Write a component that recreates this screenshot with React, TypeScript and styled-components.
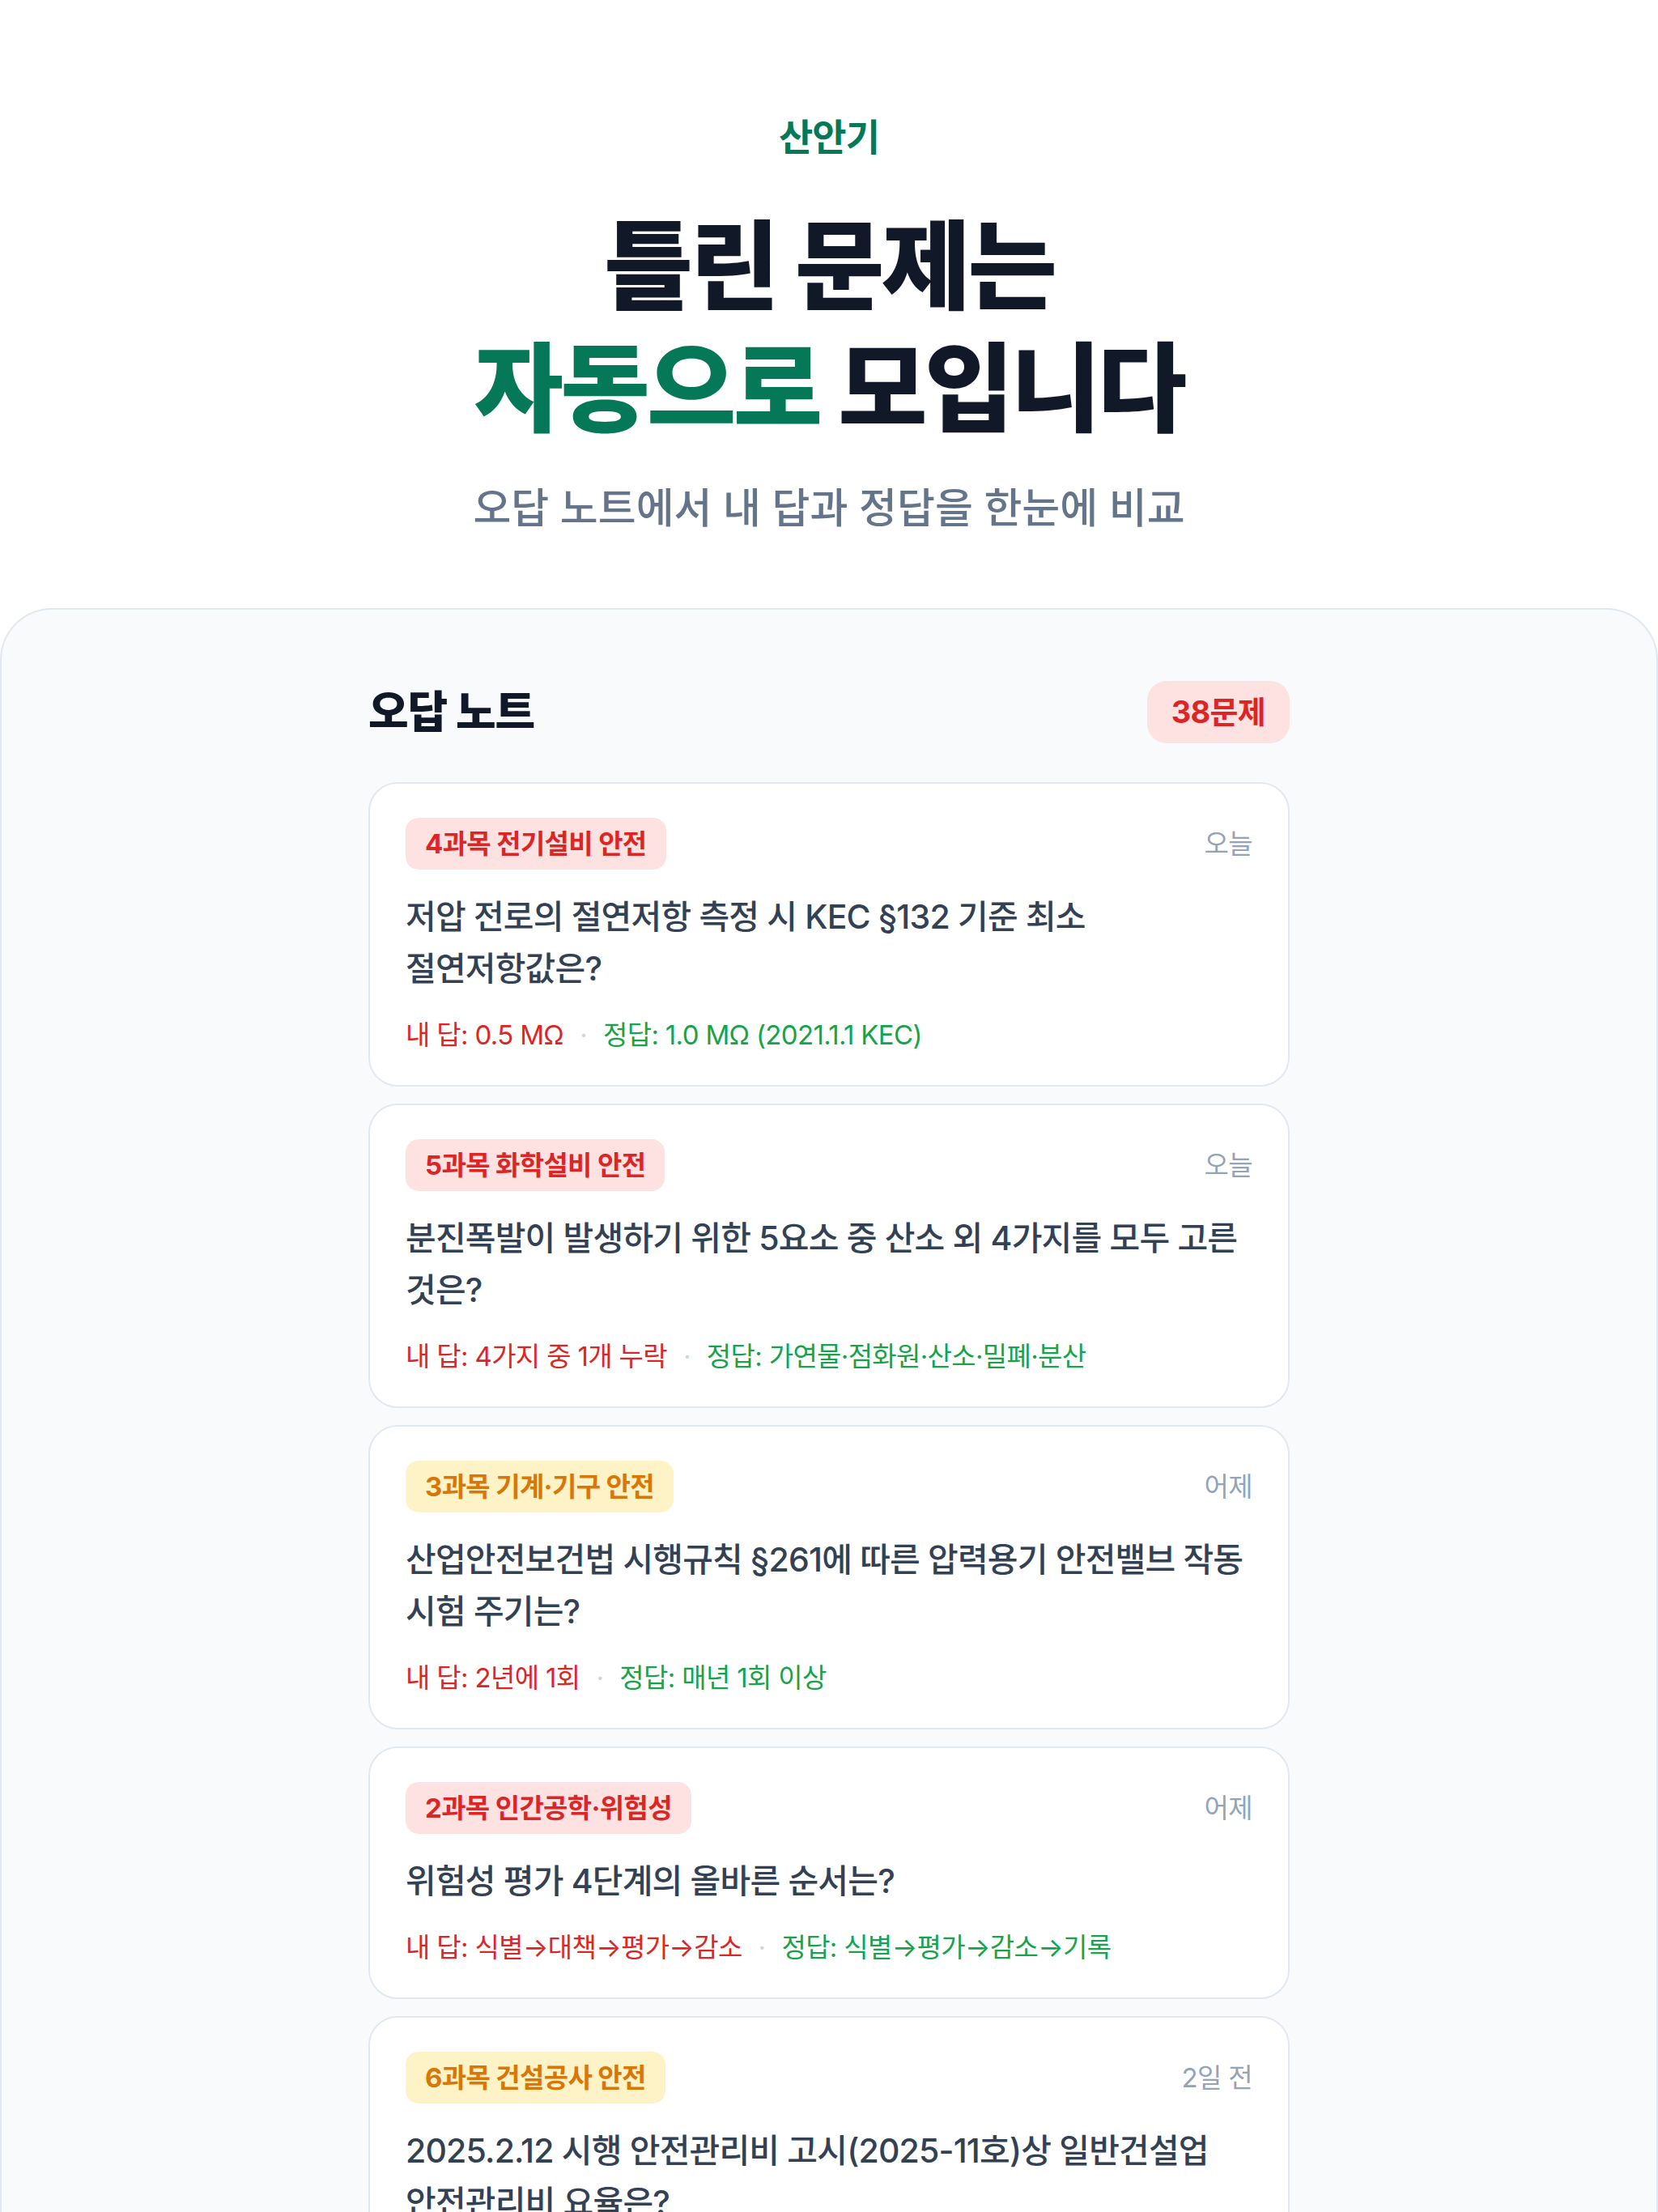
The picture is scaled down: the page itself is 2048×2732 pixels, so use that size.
import React from 'react';
import styled, { createGlobalStyle } from 'styled-components';

type Tone = 'red' | 'amber';

interface WrongNote {
    id: number;
    subject: string;
    tone: Tone;
    when: string;
    question: string;
    mine: string;
    answer: string;
}

const notes: WrongNote[] = [
    {
        id: 1,
        subject: '4과목 전기설비 안전',
        tone: 'red',
        when: '오늘',
        question: '저압 전로의 절연저항 측정 시 KEC §132 기준 최소 절연저항값은?',
        mine: '0.5 MΩ',
        answer: '1.0 MΩ (2021.1.1 KEC)',
    },
    {
        id: 2,
        subject: '5과목 화학설비 안전',
        tone: 'red',
        when: '오늘',
        question: '분진폭발이 발생하기 위한 5요소 중 산소 외 4가지를 모두 고른 것은?',
        mine: '4가지 중 1개 누락',
        answer: '가연물·점화원·산소·밀폐·분산',
    },
    {
        id: 3,
        subject: '3과목 기계·기구 안전',
        tone: 'amber',
        when: '어제',
        question: '산업안전보건법 시행규칙 §261에 따른 압력용기 안전밸브 작동 시험 주기는?',
        mine: '2년에 1회',
        answer: '매년 1회 이상',
    },
    {
        id: 4,
        subject: '2과목 인간공학·위험성',
        tone: 'red',
        when: '어제',
        question: '위험성 평가 4단계의 올바른 순서는?',
        mine: '식별→대책→평가→감소',
        answer: '식별→평가→감소→기록',
    },
    {
        id: 5,
        subject: '6과목 건설공사 안전',
        tone: 'amber',
        when: '2일 전',
        question: '2025.2.12 시행 안전관리비 고시(2025-11호)상 일반건설업 안전관리비 요율은?',
        mine: '2.93%',
        answer: '3.11%',
    },
];

const tagColors: Record<Tone, { bg: string; fg: string }> = {
    red: { bg: '#fee2e2', fg: '#dc2626' },
    amber: { bg: '#fef3c7', fg: '#d97706' },
};

export default function App() {
    return <>
        <GlobalStyle />
        <Page>
            <Hero>
                <Brand>산안기</Brand>
                <Title>
                    틀린 문제는<br />
                    <Accent>자동으로</Accent> 모입니다
                </Title>
                <Lead>오답 노트에서 내 답과 정답을 한눈에 비교</Lead>
            </Hero>
            <Panel>
                <Column>
                    <PanelHead>
                        <PanelTitle>오답 노트</PanelTitle>
                        <Count>38문제</Count>
                    </PanelHead>
                    <List>
                        {notes.map(note => <Card key={note.id}>
                            <CardTop>
                                <Tag $tone={note.tone}>{note.subject}</Tag>
                                <When>{note.when}</When>
                            </CardTop>
                            <Question>{note.question}</Question>
                            <Answers>
                                <Mine>내 답: {note.mine}</Mine>
                                <Sep>·</Sep>
                                <Right>정답: {note.answer}</Right>
                            </Answers>
                        </Card>)}
                    </List>
                </Column>
            </Panel>
        </Page>
    </>;
}

const GlobalStyle = createGlobalStyle`
    html, body {
        margin: 0;
        padding: 0;
        background: #fff;
    }

    body {
        font-family: Inter, "Noto Sans CJK KR", sans-serif;
        word-break: keep-all;
        -webkit-font-smoothing: antialiased;
    }
`;

const Page = styled.main`
    min-height: 2732px;
    display: flex;
    flex-direction: column;
`;

const Hero = styled.header`
    display: flex;
    flex-direction: column;
    align-items: center;
    padding: 140px 0 87px;
    text-align: center;
`;

const Brand = styled.div`
    font-size: 46px;
    line-height: 58px;
    font-weight: 700;
    color: #047857;
    letter-spacing: -0.02em;
`;

const Title = styled.h1`
    margin: 56px 0 0;
    font-size: 120px;
    line-height: 151px;
    font-weight: 800;
    color: #111827;
    letter-spacing: -0.03em;
`;

const Accent = styled.span`
    color: #047857;
`;

const Lead = styled.p`
    margin: 36px 0 0;
    font-size: 51px;
    line-height: 72px;
    font-weight: 500;
    color: #64748b;
`;

const Panel = styled.section`
    flex: 1;
    background: #f8fafc;
    border: 2px solid #e2e8f0;
    border-bottom: none;
    border-radius: 64px 64px 0 0;
    padding: 88px 0 96px;
`;

const Column = styled.div`
    width: 1138px;
    margin: 0 auto;
`;

const PanelHead = styled.div`
    display: flex;
    align-items: center;
    justify-content: space-between;
    margin-bottom: 48px;
`;

const PanelTitle = styled.h2`
    margin: 0;
    font-size: 54px;
    line-height: 60px;
    font-weight: 800;
    color: #111827;
    letter-spacing: -0.02em;
`;

const Count = styled.span`
    padding: 16px 30px;
    border-radius: 24px;
    background: #fee2e2;
    color: #dc2626;
    font-size: 38px;
    line-height: 45px;
    font-weight: 700;
    letter-spacing: -0.02em;
`;

const List = styled.div`
    display: flex;
    flex-direction: column;
    gap: 21px;
`;

const Card = styled.article`
    background: #fff;
    border: 2px solid #e2e8f0;
    border-radius: 36px;
    padding: 42px 44px 38px;
`;

const CardTop = styled.div`
    display: flex;
    align-items: center;
    justify-content: space-between;
`;

const Tag = styled.span<{ $tone: Tone }>`
    padding: 12px 24px;
    border-radius: 16px;
    background: ${p => tagColors[p.$tone].bg};
    color: ${p => tagColors[p.$tone].fg};
    font-size: 33px;
    line-height: 40px;
    font-weight: 700;
    letter-spacing: -0.02em;
`;

const When = styled.span`
    font-size: 33px;
    line-height: 40px;
    color: #94a3b8;
    letter-spacing: -0.02em;
`;

const Question = styled.p`
    margin: 26px 0 0;
    font-size: 41px;
    line-height: 64px;
    font-weight: 500;
    color: #334155;
    letter-spacing: -0.02em;
`;

const Answers = styled.div`
    display: flex;
    align-items: center;
    gap: 20px;
    margin-top: 26px;
    font-size: 33px;
    line-height: 48px;
    letter-spacing: -0.02em;
`;

const Mine = styled.span`
    color: #dc2626;
`;

const Sep = styled.span`
    color: #cbd5e1;
`;

const Right = styled.span`
    color: #16a34a;
`;
